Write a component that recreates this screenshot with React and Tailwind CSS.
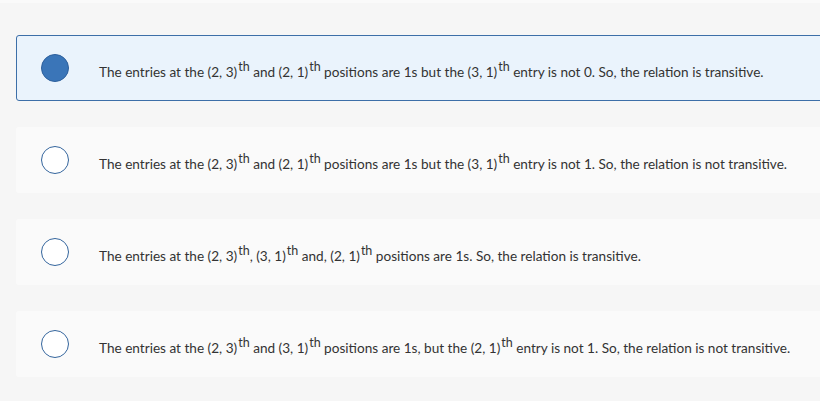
import React from "react";

const Sup = ({ children }) => (
  <sup className="text-[12.5px] relative top-[-6px] leading-none ml-[1px]">{children}</sup>
);

const options = [
  {
    selected: true,
    text: (
      <>
        The entries at the (2, 3)<Sup>th</Sup> and (2, 1)<Sup>th</Sup> positions are 1s but the (3, 1)<Sup>th</Sup> entry is not 0. So, the relation is transitive.
      </>
    ),
  },
  {
    text: (
      <>
        The entries at the (2, 3)<Sup>th</Sup> and (2, 1)<Sup>th</Sup> positions are 1s but the (3, 1)<Sup>th</Sup> entry is not 1. So, the relation is not transitive.
      </>
    ),
  },
  {
    text: (
      <>
        The entries at the (2, 3)<Sup>th</Sup>, (3, 1)<Sup>th</Sup> and, (2, 1)<Sup>th</Sup> positions are 1s. So, the relation is transitive.
      </>
    ),
  },
  {
    text: (
      <>
        The entries at the (2, 3)<Sup>th</Sup> and (3, 1)<Sup>th</Sup> positions are 1s, but the (2, 1)<Sup>th</Sup> entry is not 1. So, the relation is not transitive.
      </>
    ),
  },
];

export default function App() {
  return (
    <div
      className="w-[820px] h-[401px] overflow-hidden bg-[#f6f6f6]"
      style={{ fontFamily: "Lato, 'Open Sans', sans-serif" }}
    >
      <div className="h-[3px] bg-[#fafafa]" />
      <div className="flex flex-col gap-[26px] pt-[32px] pl-[16px]">
        {options.map((o, i) => (
          <div
            key={i}
            className={
              "flex items-center h-[66px] w-[820px] rounded-[3px] " +
              (o.selected
                ? "bg-[#eaf3fc] border border-[#3d6fa8]"
                : "bg-[#fafafa] border border-transparent")
            }
          >
            <div className="w-[82px] flex pl-[24px]">
              {o.selected ? (
                <div className="w-[28px] h-[28px] rounded-full bg-[#3a75b8] border border-[#2d5f9c]" />
              ) : (
                <div className="w-[28px] h-[28px] rounded-full bg-white border-[1.5px] border-[#34659d]" />
              )}
            </div>
            <div className="text-[13.6px] text-[#333333] pt-[8px] whitespace-nowrap">{o.text}</div>
          </div>
        ))}
      </div>
    </div>
  );
}
